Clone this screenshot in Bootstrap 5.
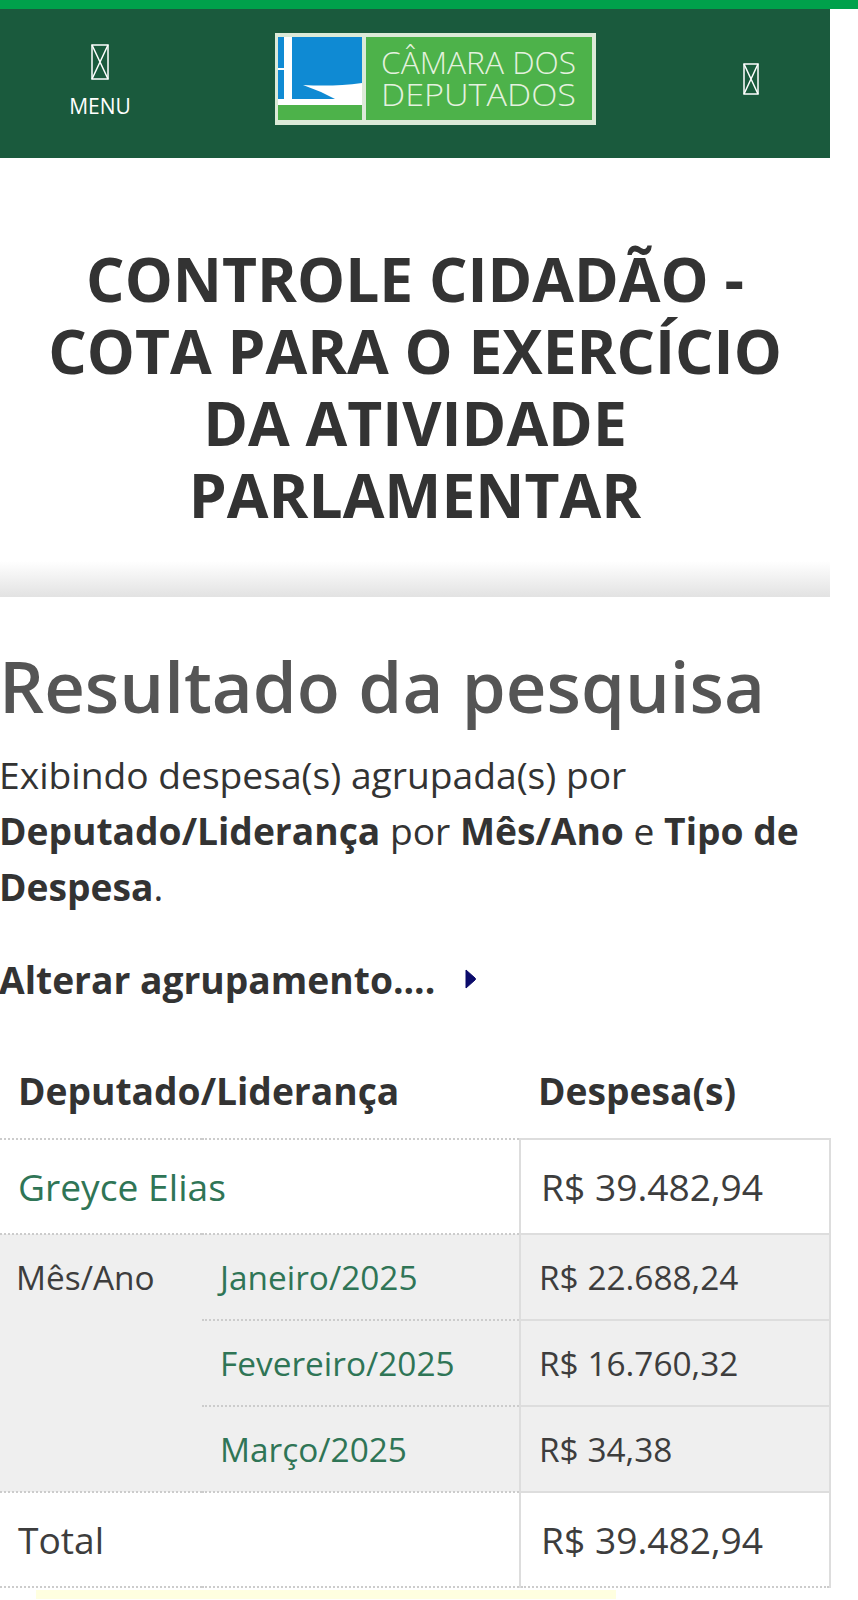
<!DOCTYPE html>
<html lang="pt-BR">

<head>
    <meta charset="UTF-8">
    <meta name="viewport" content="width=device-width, initial-scale=1.0">
    <title>Controle Cidadão</title>
    <link rel="stylesheet" href="https://cdn.jsdelivr.net/npm/bootstrap@5.3.0/dist/css/bootstrap.min.css">
    <style>
        body {
            font-family: "Open Sans", sans-serif;
            color: #333;
            background: #fff;
        }

        .top-strip {
            height: 9px;
            background-color: #00a14b;
        }

        .page-wrap {
            width: 830px;
        }

        .site-head {
            height: 149px;
            background-color: #1a5a3d;
            color: #fff;
            padding: 24px 0 0 0;
        }

        .menu-toggle {
            width: 200px;
            padding-top: 11px;
            font-size: 21px;
            line-height: 27px;
            gap: 13px;
        }

        .search-toggle {
            width: 149px;
            padding: 30px 9px 0 0;
        }

        .missing-glyph {
            display: block;
        }

        .logo-box {
            width: 321px;
            height: 92px;
            margin-left: -10px;
        }

        .title-band {
            padding: 85px 30px 0;
            background: linear-gradient(#fff 0, #fff 403px, #e3e3e3 438px, #e3e3e3 439px);
            height: 439px;
        }

        .title-band h1 {
            font-size: 60.5px;
            line-height: 72px;
            font-weight: 700;
            margin: 0;
        }

        .result-title {
            font-size: 70.7px;
            font-weight: 600;
            color: #555;
            line-height: 92px;
            margin: 43px 0 0 -1px;
        }

        .result-note {
            font-size: 37.2px;
            line-height: 56px;
            margin: 15px 0 0 -1px;
        }

        .group-toggle {
            font-size: 37.2px;
            font-weight: 700;
            line-height: 56px;
            margin: 37px 0 0 -1px;
            gap: 30px;
        }

        .group-toggle svg {
            margin-top: -2px;
        }

        .result-table {
            width: 830px;
            table-layout: fixed;
            margin: 49px 0 0;
            border-collapse: collapse;
        }

        .result-table th {
            font-size: 37.2px;
            font-weight: 700;
            height: 82px;
            padding: 0 0 14px 18px;
        }

        .result-table td {
            padding: 0 0 0 18px;
            border-top: 2px dotted #ccc;
            color: #3d3d3d;
        }

        .result-table .amount {
            border: 2px solid #ddd;
        }

        .result-table a {
            color: #2f7556;
            text-decoration: none;
        }

        .row-big td {
            font-size: 37.2px;
            height: 95px;
        }

        .row-big .amount {
            padding-left: 20px;
        }

        .row-big:last-child td {
            border-bottom: 2px dotted #ccc;
        }

        .row-month td {
            font-size: 33.4px;
            height: 86px;
            background-color: #efefef;
        }

        .result-table .month-label {
            padding-left: 16px;
            vertical-align: top;
            padding-top: 17px;
        }

        .notice-strip {
            width: 580px;
            height: 9px;
            margin: 2px 0 0 36px;
            background-color: #ffffe0;
        }
    </style>
</head>

<body>
    <div class="top-strip"></div>
    <div class="page-wrap">
        <header class="site-head d-flex">
            <div class="menu-toggle d-flex flex-column align-items-center">
                <svg class="missing-glyph" width="18" height="36" viewBox="0 0 18 36" fill="none" stroke="#fff" stroke-width="1.5">
                    <rect x="1" y="1" width="16" height="34"/>
                    <path d="M1 1 17 35M17 1 1 35"/>
                </svg>
                <span>MENU</span>
            </div>
            <div class="flex-grow-1 d-flex justify-content-center">
                <svg class="logo-box" viewBox="0 0 321 92" role="img" aria-label="Câmara dos Deputados">
                    <rect width="321" height="92" fill="#dcead8"/>
                    <rect x="3" y="4" width="84" height="68" fill="#0f8ad3"/>
                    <rect x="3" y="72" width="84" height="15" fill="#4db24a"/>
                    <rect x="91" y="4" width="226" height="83" fill="#4db24a"/>
                    <path d="M9 4h8v62H9zM3 35h6v2H3z" fill="#fff"/>
                    <path d="M28 52 46 59 60 66 87 66V50C66 53 46 53 28 52Z" fill="#fff"/>
                    <rect x="3" y="66" width="84" height="6" fill="#fff"/>
                    <text x="106" y="41" font-family="Open Sans, sans-serif" font-size="32" font-weight="300" fill="#e4f1df" textLength="195" lengthAdjust="spacingAndGlyphs">CÂMARA DOS</text>
                    <text x="106" y="73" font-family="Open Sans, sans-serif" font-size="32" font-weight="300" fill="#e4f1df" textLength="195" lengthAdjust="spacingAndGlyphs">DEPUTADOS</text>
                </svg>
            </div>
            <div class="search-toggle d-flex justify-content-center">
                <svg class="missing-glyph" width="16" height="32" viewBox="0 0 16 32" fill="none" stroke="#fff" stroke-width="1.5">
                    <rect x="1" y="1" width="14" height="30"/>
                    <path d="M1 1 15 31M15 1 1 31"/>
                </svg>
            </div>
        </header>

        <div class="title-band text-center">
            <h1>CONTROLE CIDADÃO - COTA PARA O EXERCÍCIO DA ATIVIDADE PARLAMENTAR</h1>
        </div>

        <h2 class="result-title">Resultado da pesquisa</h2>
        <p class="result-note">Exibindo despesa(s) agrupada(s) por <b>Deputado/Liderança</b> por <b>Mês/Ano</b> e <b>Tipo de Despesa</b>.</p>
        <div class="group-toggle d-flex align-items-center">
            <span>Alterar agrupamento....</span>
            <svg width="11" height="20" viewBox="0 0 11 20"><path d="M1 1 10 9Q11 10 10 11L1 19Z" fill="#0b0b6b" stroke="#0b0b6b"/></svg>
        </div>

        <table class="result-table">
            <colgroup>
                <col style="width: 202px">
                <col style="width: 318px">
                <col style="width: 310px">
            </colgroup>
            <thead>
                <tr>
                    <th colspan="2">Deputado/Liderança</th>
                    <th>Despesa(s)</th>
                </tr>
            </thead>
            <tbody>
                <tr class="row-big">
                    <td colspan="2"><a href="#">Greyce Elias</a></td>
                    <td class="amount">R$ 39.482,94</td>
                </tr>
                <tr class="row-month">
                    <td class="month-label" rowspan="3">Mês/Ano</td>
                    <td><a href="#">Janeiro/2025</a></td>
                    <td class="amount">R$ 22.688,24</td>
                </tr>
                <tr class="row-month">
                    <td><a href="#">Fevereiro/2025</a></td>
                    <td class="amount">R$ 16.760,32</td>
                </tr>
                <tr class="row-month">
                    <td><a href="#">Março/2025</a></td>
                    <td class="amount">R$ 34,38</td>
                </tr>
                <tr class="row-big">
                    <td colspan="2">Total</td>
                    <td class="amount">R$ 39.482,94</td>
                </tr>
            </tbody>
        </table>
        <div class="notice-strip"></div>
    </div>

    <script src="https://cdn.jsdelivr.net/npm/bootstrap@5.3.0/dist/js/bootstrap.bundle.min.js"></script>
</body>

</html>
